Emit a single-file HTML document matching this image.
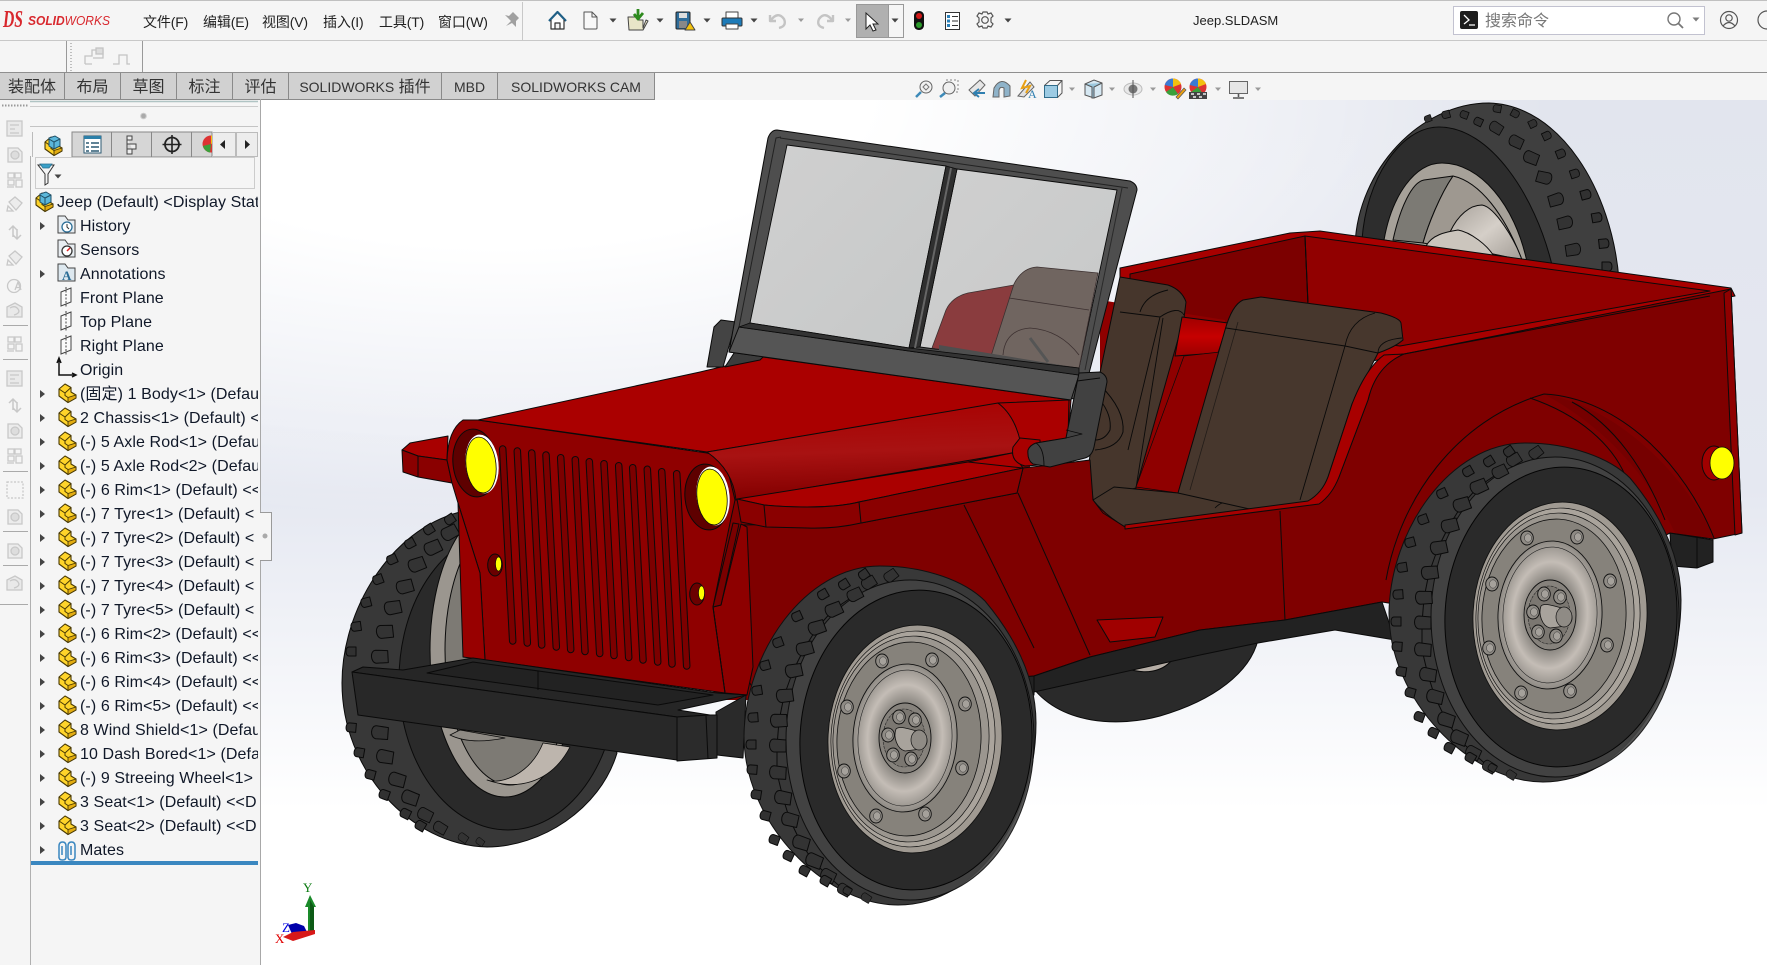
<!DOCTYPE html>
<html lang="zh"><head><meta charset="utf-8"><title>Jeep.SLDASM</title>
<style>
html,body{margin:0;padding:0;width:1767px;height:965px;overflow:hidden;background:#f5f5f5}
body{position:relative;font-family:"Liberation Sans","Noto Sans CJK SC",sans-serif;color:#222}
.a{position:absolute;white-space:nowrap}
.m{top:12px;height:20px;line-height:20px;font-size:14px;letter-spacing:-.15px;color:#222}
.t{top:73px;height:26px;line-height:29px;font-size:16px;color:#333;text-align:center;background:#d1d1d1;border-right:1px solid #8a8a8a;box-sizing:border-box}
.t span{font-size:14px}
.r{left:80px;width:178px;height:24px;line-height:24px;font-size:16px;letter-spacing:.1px;color:#101828;overflow:hidden;margin-top:2px}
#gfx{left:261px;top:100px;width:1506px;height:865px;background:radial-gradient(1050px 420px at 240px 0,#fff 0,#fff 35%,rgba(255,255,255,.5) 70%,rgba(255,255,255,0) 100%),linear-gradient(180deg,#e2e5ee 0,#e5e8f1 45%,#fff 82%)}
svg{position:absolute;left:0;top:0}
</style></head><body>
<div class="a" style="left:0;top:0;width:1767px;height:1px;background:#c0c0c0"></div>
<div class="a" style="left:0;top:40px;width:1767px;height:1px;background:#c8c8c8"></div>
<div class="a" style="left:0;top:72px;width:1767px;height:1px;background:#8f8f8f"></div>
<div class="a" id="gfx"></div>

<svg width="1767" height="965" viewBox="0 0 1767 965" xmlns="http://www.w3.org/2000/svg">
<defs>
<linearGradient id="hood" x1="0" y1="0" x2="0.12" y2="1"><stop offset="0" stop-color="#a80000"/><stop offset=".55" stop-color="#a81212"/><stop offset="1" stop-color="#830000"/></linearGradient>
<linearGradient id="glass" x1="0" y1="0" x2="1" y2="1"><stop offset="0" stop-color="#d0d0d0"/><stop offset="1" stop-color="#c6c8c8"/></linearGradient>
<radialGradient id="dish" cx=".5" cy=".5" r=".5"><stop offset="0" stop-color="#8a8680"/><stop offset=".48" stop-color="#8d8983"/><stop offset=".72" stop-color="#c4bdb6"/><stop offset="1" stop-color="#8f8b85"/></radialGradient>
<linearGradient id="tube" x1="0" y1="0" x2="0" y2="1"><stop offset="0" stop-color="#a00000"/><stop offset=".5" stop-color="#c60000"/><stop offset="1" stop-color="#9a0000"/></linearGradient>
<linearGradient id="cone" x1="0" y1="0" x2="1" y2="1"><stop offset="0" stop-color="#a8a29b"/><stop offset=".5" stop-color="#d5cfc8"/><stop offset="1" stop-color="#a29c95"/></linearGradient>
<path id="lg" d="M8,-6 L-4,-7 C-10,-7 -10,5 -4,6 L8,6 Z" fill="#333" stroke="#0a0a0a" stroke-width="1"/>
<path id="ls" d="M5,-5 L-2,-5 C-6,-5 -6,4 -2,4 L5,4 Z" fill="#313131" stroke="#0a0a0a" stroke-width="1"/>
<g id="bolt"><ellipse rx="6.3" ry="7" fill="#8f8b85" stroke="#111" stroke-width=".9"/><ellipse cx="1" rx="3.5" ry="4.2" fill="#a5a19b" stroke="#333" stroke-width=".5"/></g>
<g id="wheel">
 <path d="M1389,613 C1390,530 1450,443 1525,443 C1570,443 1610,458 1630,478 C1665,520 1681,560 1681,600 C1681,690 1625,782 1543,782 C1470,782 1389,700 1389,613 Z" fill="#383838" stroke="#111"/>
 <ellipse cx="1555" cy="617" rx="124" ry="160" fill="#444" opacity=".9"/>
 <ellipse cx="1561" cy="617" rx="116" ry="150" transform="rotate(3 1561 617)" fill="#2a2a2a" stroke="#050505"/>
 <polyline points="1500,472 1478,487 1462,505 1449,526 1438,548 1429,573 1424,598 1422,623 1422,650 1428,675 1435,697 1446,720 1458,738 1473,753 1489,767" fill="none" stroke="#0a0a0a"/>
 <use href="#lg" transform="translate(1536,453) rotate(-38) scale(.8)"/><use href="#lg" transform="translate(1514,460) rotate(-32) scale(.85)"/><use href="#lg" transform="translate(1500,472) rotate(-28) scale(.9)"/><use href="#lg" transform="translate(1479,487) rotate(-25)"/><use href="#lg" transform="translate(1462,505) rotate(-20)"/><use href="#lg" transform="translate(1450,526) rotate(-16)"/><use href="#lg" transform="translate(1439,548) rotate(-12)"/><use href="#lg" transform="translate(1430,573) rotate(-8)"/><use href="#lg" transform="translate(1424,598) rotate(-4)"/><use href="#lg" transform="translate(1423,623)"/><use href="#lg" transform="translate(1423,650) rotate(3)"/><use href="#lg" transform="translate(1428,675) rotate(8)"/><use href="#lg" transform="translate(1435,697) rotate(12)"/><use href="#lg" transform="translate(1446,720) rotate(16)"/><use href="#lg" transform="translate(1459,738) rotate(20)"/><use href="#lg" transform="translate(1473,753) rotate(24) scale(.9)"/><use href="#lg" transform="translate(1489,767) rotate(28) scale(.8)"/><use href="#lg" transform="translate(1511,775) rotate(30) scale(.6)"/>
 <use href="#ls" transform="translate(1509,452) rotate(-35)"/><use href="#ls" transform="translate(1489,462) rotate(-32)"/><use href="#ls" transform="translate(1468,472) rotate(-30)"/><use href="#ls" transform="translate(1442,494) rotate(-24)"/><use href="#ls" transform="translate(1423,520) rotate(-20)"/><use href="#ls" transform="translate(1410,543) rotate(-15)"/><use href="#ls" transform="translate(1402,568) rotate(-9)"/><use href="#ls" transform="translate(1398,595) rotate(-4)"/><use href="#ls" transform="translate(1396,622)"/><use href="#ls" transform="translate(1397,647) rotate(4)"/><use href="#ls" transform="translate(1401,672) rotate(9)"/><use href="#ls" transform="translate(1410,693) rotate(15)"/><use href="#ls" transform="translate(1419,717) rotate(20)"/><use href="#ls" transform="translate(1433,733) rotate(25)"/><use href="#ls" transform="translate(1449,748) rotate(28)"/><use href="#ls" transform="translate(1470,758) rotate(30)"/><use href="#ls" transform="translate(1492,768) rotate(30) scale(.8)"/>
 <ellipse cx="1560" cy="616" rx="87" ry="114" transform="rotate(3 1560 616)" fill="#a09a92" stroke="#111" stroke-width=".9"/>
 <ellipse cx="1558" cy="616" rx="82" ry="108" transform="rotate(3 1558 616)" fill="#aaa49c" stroke="#111" stroke-width=".7"/>
 <ellipse cx="1556" cy="616" rx="78" ry="103" transform="rotate(3 1556 616)" fill="#9b968f" stroke="#111" stroke-width=".7"/>
 <ellipse cx="1554" cy="616" rx="72" ry="97" transform="rotate(3 1554 616)" fill="#86827b" stroke="#111" stroke-width=".8"/>
 <ellipse cx="1550" cy="615" rx="52" ry="74" transform="rotate(3 1550 615)" fill="url(#dish)" stroke="#111" stroke-width=".9"/>
 <ellipse cx="1550" cy="615" rx="47" ry="68" transform="rotate(3 1550 615)" fill="none" stroke="#222" stroke-width=".6"/>
 <ellipse cx="1550" cy="615" rx="26" ry="35" fill="#86827c" stroke="#111" stroke-width=".9"/>
 <ellipse cx="1549" cy="615" rx="21" ry="29" fill="#7b7771" stroke="#222" stroke-width=".6" stroke-dasharray="3 1"/>
 <use href="#bolt" x="1527" y="538"/><use href="#bolt" x="1577" y="537"/><use href="#bolt" x="1610" y="581"/><use href="#bolt" x="1607" y="645"/><use href="#bolt" x="1570" y="691"/><use href="#bolt" x="1521" y="693"/><use href="#bolt" x="1489" y="648"/><use href="#bolt" x="1492" y="584"/>
 <use href="#bolt" x="1544" y="594"/><use href="#bolt" x="1560" y="597"/><use href="#bolt" x="1533" y="612"/><use href="#bolt" x="1538" y="632"/><use href="#bolt" x="1556" y="636"/>
 <path d="M1541,606 C1545,602 1556,607 1566,609 C1574,612 1574,624 1566,626 L1550,628 C1542,626 1538,614 1541,606 Z" fill="#a8a39c" stroke="#111" stroke-width=".8"/>
 <ellipse cx="1564" cy="617" rx="8" ry="10" fill="#8f8b85" stroke="#111" stroke-width=".7"/>
</g>
<g id="prt"><path d="M1,6 L7,1 L13,4.5 L13,9 L18,12 V15 L10,19.5 L1,13 Z" fill="#ffd42a" stroke="#4a3a05" stroke-width="1.1" stroke-linejoin="round"/><path d="M10,14.5 L18,12 V15 L10,19.5 Z" fill="#e3ac10" stroke="#4a3a05" stroke-width=".9"/><path d="M1,6 L7,10 L13,4.5 M7,10 V12.5 L10,14.5" fill="none" stroke="#4a3a05" stroke-width="1"/></g>
<path id="tri" d="M0,-4 L5,0 L0,4 Z" fill="#444"/>
<path id="dd" d="M-3.5,-1.5 H3.5 L0,2.5 Z" fill="#444"/>
<path id="ddg" d="M-3,-1.5 H3 L0,2 Z" fill="#9a9a9a"/>
<g id="plane" fill="none" stroke="#444" stroke-width="1"><path d="M1,5 L11,1 V15 L1,19 Z" fill="#fafafa"/><path d="M6,0 V20" stroke-dasharray="2 1.5"/></g>
<g id="gi" fill="none" stroke="#c8c8c8" stroke-width="1.3"><rect x="1" y="1" width="15" height="15" fill="#e9e9e9"/><path d="M4,5 H13 M4,9 H9 M4,13 H13"/></g>
<g id="g2" fill="none" stroke="#c8c8c8" stroke-width="1.3"><path d="M2,2 H12 L16,6 V16 H2 Z" fill="#ececec"/><circle cx="9" cy="9" r="4" fill="#ddd"/></g>
<g id="g3" fill="none" stroke="#c8c8c8" stroke-width="1.3"><rect x="2" y="1" width="6" height="5"/><rect x="9" y="1" width="6" height="5"/><rect x="2" y="8" width="6" height="5"/><path d="M10,8 H16 V15 H10 Z M1,15 H8"/></g>
<g id="g4" fill="none" stroke="#c8c8c8" stroke-width="1.3"><path d="M3,6 L9,1 L16,7 L10,14 Z" fill="#ececec"/><path d="M2,10 L7,15 H1 Z"/></g>
<g id="g5" fill="none" stroke="#c8c8c8" stroke-width="1.5"><path d="M7,3 V13 M3,6 L7,2 L11,6 M11,15 V5"/><path d="M15,11 L11,15 L7,11"/></g>
<g id="g6" fill="none" stroke="#c8c8c8" stroke-width="1.3"><circle cx="8" cy="9" r="6.500"/><path d="M9,13 L12,5 L15,13 M10,10.500 H14"/></g>
<g id="g7" fill="none" stroke="#c8c8c8" stroke-width="1.3"><path d="M1,5 L9,1 L16,5 V15 H1 Z" fill="#e9e9e9"/><path d="M4,6 Q9,3 12,7 Q15,11 8,13"/></g>
<g id="g8" fill="none" stroke="#c8c8c8" stroke-width="1.3"><rect x="1" y="1" width="16" height="16" stroke-dasharray="2 1.500"/></g>
</defs>

<!-- ===== Spare wheel ===== -->
<g stroke="#0a0a0a" stroke-linejoin="round">
<path d="M1355,245 C1358,170 1420,103 1489,103 C1560,105 1612,190 1619,280 L1355,250 Z" fill="#3f3f3f"/>
<path d="M1362,240 C1366,180 1400,127 1439,127 C1490,127 1535,195 1552,265 L1362,240 Z" fill="#2d2d2d"/>
<path d="M1384,240 C1392,195 1415,163 1442,163 C1480,163 1515,205 1527,262 Z" fill="#a6a199"/>
<path d="M1393,240 C1400,208 1412,182 1424,180 L1453,176 C1440,195 1428,225 1423,243 Z" fill="#7c7a74"/>
<path d="M1453,176 C1480,182 1505,215 1522,260 L1423,243 C1428,225 1440,195 1453,176 Z" fill="#9e9890"/>
<path d="M1450,232 C1458,215 1470,205 1482,205 C1495,207 1515,240 1522,260 L1450,245 Z" fill="url(#cone)"/>
<path d="M1426,246 C1432,235 1445,232 1458,230 C1470,232 1488,245 1495,258 Z" fill="#cbc5bd"/>
<g stroke-width="1">
<use href="#lg" transform="translate(1496,128) rotate(30) scale(.8)"/><use href="#lg" transform="translate(1516,142) rotate(24) scale(.85)"/><use href="#lg" transform="translate(1531,158) rotate(20) scale(.9)"/><use href="#lg" transform="translate(1544,178) rotate(16) scale(-.9,.9)"/><use href="#lg" transform="translate(1556,200) rotate(-15) scale(-.9,.9)"/><use href="#lg" transform="translate(1565,223) rotate(-12) scale(-.9,.9)"/><use href="#lg" transform="translate(1573,250) rotate(-8) scale(-.9,.9)"/>
<use href="#ls" transform="translate(1515,114) rotate(28) scale(-.8,.8)"/><use href="#ls" transform="translate(1533,124) rotate(-25) scale(-.8,.8)"/><use href="#ls" transform="translate(1547,136) rotate(-25) scale(-.85,.85)"/><use href="#ls" transform="translate(1561,154) rotate(-22) scale(-.9,.9)"/><use href="#ls" transform="translate(1575,174) rotate(-18) scale(-.9,.9)"/><use href="#ls" transform="translate(1586,195) rotate(-15) scale(-1,1)"/><use href="#ls" transform="translate(1597,218) rotate(-10) scale(-1,1)"/><use href="#ls" transform="translate(1604,244) rotate(-6) scale(-1,1)"/><use href="#ls" transform="translate(1607,267) scale(-1,1)"/>
<use href="#ls" transform="translate(1478,122) rotate(25) scale(.85)"/><use href="#ls" transform="translate(1464,115) rotate(20) scale(.8)"/><use href="#ls" transform="translate(1446,115) rotate(-15) scale(.8)"/><use href="#ls" transform="translate(1428,119) rotate(-20) scale(.7)"/><use href="#ls" transform="translate(1497,109) rotate(10) scale(.8)"/>
</g>
</g>

<!-- ===== Body: bed ===== -->
<g stroke="#0a0a0a" stroke-linejoin="round">
<path d="M1120,268 L1290,233 L1320,231 L1731,288 L1735,296 L1404,356 L1120,400 Z" fill="#a80000"/>
<polygon points="1130,274 1305,236 1308,305 1225,330 1130,340" fill="#7c0000"/>
<polygon points="1305,236 1710,291 1400,346 1260,330 1225,330 1308,305" fill="#910000"/>
<line x1="1305" y1="236" x2="1308" y2="302"/>

<!-- rear tail stub -->
<path d="M1670,533 L1713,540 L1713,562 L1697,568 L1672,566 Z" fill="#222"/>
<line x1="1697" y1="537" x2="1697" y2="568"/>

<!-- far rear wheel under sill -->
<path d="M1030,684 C1060,726 1120,727 1160,716 C1215,700 1250,672 1258,640 L1258,625 L1034,670 Z" fill="#2a2a2a"/>
<path d="M1125,668 L1172,660 C1162,672 1145,675 1125,668 Z" fill="#b5ada5"/>

<!-- cockpit floor backing -->
<polygon points="1100,300 1225,320 1230,500 1100,520" fill="#8f0000" stroke="none"/>
<!-- body backing between hood and side -->
<polygon points="700,445 1030,440 1030,500 760,700 715,700 700,600" fill="#800000" stroke="none"/>

<!-- driver seat -->
<path d="M1120,277 L1168,285 Q1182,290 1186,302 L1184,318 L1136,488 L1093,500 L1089,463 L1100,373 Z" fill="#46362c"/>
<path d="M1120,312 L1160,317 L1128,450 M1160,317 Q1178,305 1184,315 M1168,290 Q1145,295 1140,312" fill="none" stroke-width=".9"/>
<path d="M1163,318 L1136,488" fill="none" stroke-width=".9"/>
<!-- tube -->
<polygon points="1182,317 1228,323 1218,353 1175,356" fill="url(#tube)"/>
<polygon points="1184,356 1220,352 1178,493 1136,487" fill="#8f0000" stroke-width=".7"/>
<!-- cushion -->
<path d="M1093,500 L1114,487 L1178,493 L1228,500 L1258,510 L1125,527 Q1105,515 1093,500 Z" fill="#46362c"/>
<path d="M1215,508 Q1225,497 1250,502" fill="none" stroke-width=".8"/>
<!-- passenger seat -->
<path d="M1178,493 L1225,330 Q1232,305 1243,300 L1261,297 L1381,313 Q1400,318 1401,323 L1403,340 Q1395,347 1378,353 L1352,404 L1328,477 Q1322,493 1308,503 L1254,510 Z" fill="#47372d"/>
<path d="M1226,328 L1345,346 L1378,353 M1345,346 L1300,500 M1345,346 Q1350,320 1375,313 M1378,353 Q1378,340 1402,338" fill="none" stroke-width=".9"/>
<path d="M1238,322 L1190,490" fill="none" stroke-width=".8" stroke-opacity=".6"/>

<!-- near side panel -->
<path d="M742,525 L861,523 L1017,493 L1023,468 L1050,465 L1090,460 L1093,500 L1103,513 L1125,527 L1319,503 L1339,477 L1368,400 L1380,358 L1404,354 L1731,289 L1742,533 L1713,539 L1670,533 L1500,620 L1382,602 L1285,620 L1200,630 L1090,657 L1034,676 L760,700 L748,680 Z" fill="#7f0000"/>
<!-- bright strip -->
<path d="M1404,354 L1384,355 Q1366,368 1352,404 L1328,477 Q1322,493 1308,501 L1125,525 L1125,529 L1319,504 Q1332,495 1339,477 L1368,400 Q1376,366 1404,354 Z" fill="#a80000"/>
<polygon points="1724,293 1731,289 1742,533 1735,535" fill="#8f0000"/>
<line x1="1404" y1="354" x2="1710" y2="296"/>
<!-- rear fender -->
<path d="M1544,394 C1610,405 1680,465 1714,538 L1675,533 C1650,480 1610,430 1544,394 Z" fill="#760000" stroke="none"/>
<path d="M1386,580 C1400,500 1455,420 1544,394 C1620,398 1685,465 1714,538 M1530,398 C1580,415 1612,445 1625,475 M1572,402 C1615,425 1645,470 1665,520" fill="none" stroke-width="1"/>
<line x1="1285" y1="620" x2="1280" y2="511"/>
<!-- sill -->
<path d="M1034,676 L1090,657 L1200,630 L1285,620 L1382,602 L1395,640 L1335,630 L1258,643 L1200,655 L1034,692 Z" fill="#222"/>
<path d="M760,700 L1034,676 L1034,695 L760,720 Z" fill="#222"/>
<!-- ledge -->
<polygon points="1097,620 1163,617 1155,637 1110,642" fill="#a00000"/>
<line x1="1018" y1="493" x2="1090" y2="655"/>
<line x1="964" y1="505" x2="1034" y2="648"/>
<line x1="861" y1="523" x2="858" y2="503"/>

<!-- Far front wheel -->
<path d="M342,683 C342,610 390,530 460,512 L520,520 L617,753 C600,810 540,847 487,847 C410,845 342,770 342,683 Z" fill="#383838"/>
<ellipse cx="508" cy="680" rx="109" ry="150" fill="#2a2a2a"/>
<ellipse cx="505" cy="650" rx="75" ry="147" fill="#9b968f"/>
<ellipse cx="510" cy="650" rx="65" ry="135" fill="#7d7a74"/>
<path d="M487,780 C500,785 530,775 543,743 L570,747 C550,785 515,790 487,780 Z" fill="#bdb5ad" stroke-width=".8"/>
<path d="M450,735 Q470,745 505,738 L460,730 Z" fill="#8e8a84" stroke-width=".8"/>
<g>
<use href="#lg" transform="translate(380,657) rotate(-3)"/><use href="#lg" transform="translate(385,632) rotate(-6)"/><use href="#lg" transform="translate(393,608) rotate(-12)"/><use href="#lg" transform="translate(405,587) rotate(-16)"/><use href="#lg" transform="translate(417,565) rotate(-22)"/><use href="#lg" transform="translate(433,548) rotate(-26)"/><use href="#lg" transform="translate(450,533) rotate(-30)"/>
<use href="#lg" transform="translate(380,733) rotate(4)"/><use href="#lg" transform="translate(385,757) rotate(8)"/><use href="#lg" transform="translate(397,780) rotate(14)"/><use href="#lg" transform="translate(410,798) rotate(18)"/><use href="#lg" transform="translate(425,815) rotate(24) scale(.9)"/><use href="#lg" transform="translate(440,828) rotate(28) scale(.8)"/><use href="#lg" transform="translate(463,838) rotate(32) scale(.6)"/><use href="#lg" transform="translate(480,842) rotate(34) scale(.5)"/>
<use href="#ls" transform="translate(351,652)"/><use href="#ls" transform="translate(356,627) rotate(-8)"/><use href="#ls" transform="translate(366,603) rotate(-14)"/><use href="#ls" transform="translate(378,580) rotate(-20)"/><use href="#ls" transform="translate(392,560) rotate(-24)"/><use href="#ls" transform="translate(410,544) rotate(-28)"/><use href="#ls" transform="translate(429,530) rotate(-32)"/><use href="#ls" transform="translate(450,520) rotate(-34)"/>
<use href="#ls" transform="translate(351,728) rotate(5)"/><use href="#ls" transform="translate(359,753) rotate(10)"/><use href="#ls" transform="translate(370,775) rotate(15)"/><use href="#ls" transform="translate(384,795) rotate(20)"/><use href="#ls" transform="translate(405,814) rotate(26)"/><use href="#ls" transform="translate(420,826) rotate(30)"/>
</g>

<!-- Near rear wheel -->
<use href="#wheel"/>

<!-- Front panel right -->
<polygon points="741,524 747,527 753,667 747,695 725,693 713,607 721,605" fill="#8d0000"/>
<!-- Left fender -->
<path d="M402,450 L410,443 L448,436 L447,460 L418,456 Z" fill="#a80000"/>
<path d="M402,450 L418,456 L447,460 L452,483 L418,477 L403,472 Z" fill="#8a0000"/>
<line x1="418" y1="456" x2="418" y2="477"/>
<!-- Grille plate -->
<path d="M447,460 Q448,430 463,420 L478,420 L707,453 Q722,456 727,467 L735,500 L730,523 L713,607 L725,693 L485,660 L480,573 L458,503 L452,483 Z" fill="#8f0000"/>
<path d="M458,503 L480,573 L485,660 L463,657 Z" fill="#980000"/>
<!-- Wedge -->
<polygon points="733,523 739,524 721,605 713,607" fill="#7a0000"/>
<line x1="713" y1="607" x2="725" y2="693"/>
<!-- Grille slots -->
<g stroke-linecap="round" fill="none">
<g stroke="#0a0a0a" stroke-width="7.5">
<path d="M502.7,449 L512.7,641 M517.3,451 L527.3,643 M531.7,453 L541.7,645 M546,455 L556.3,647 M560.7,457.7 L570.7,649.5 M575.3,459.7 L585,651.5 M589.3,461.7 L599.7,653.5 M604,463.7 L614,655.5 M618.7,465.7 L628.7,657.5 M632.7,467.7 L643,660 M647.3,469.3 L657.7,662 M661.7,471.7 L672,664 M676.7,473.7 L686.7,666"/>
</g>
<g stroke="#7c0000" stroke-width="5.5">
<path d="M502.7,449 L512.7,641 M517.3,451 L527.3,643 M531.7,453 L541.7,645 M546,455 L556.3,647 M560.7,457.7 L570.7,649.5 M575.3,459.7 L585,651.5 M589.3,461.7 L599.7,653.5 M604,463.7 L614,655.5 M618.7,465.7 L628.7,657.5 M632.7,467.7 L643,660 M647.3,469.3 L657.7,662 M661.7,471.7 L672,664 M676.7,473.7 L686.7,666"/>
</g>
</g>
<!-- Hood -->
<polygon points="478,420 700,372 763,357 1071,400 1068,440 998,404 707,452" fill="#aa0000"/>
<path d="M707,452 L998,403 Q1012,412 1020,438 L1012,453 L736,500 Q733,470 707,452 Z" fill="url(#hood)"/>
<path d="M998,403 L1069,400 L1068,438 L1036,443 L1020,440 Q1014,415 998,403 Z" fill="#aa0000"/>
<!-- Near fender -->
<path d="M737,499 L968,462 L1012,453 L1023,468 L859,502 Q840,507 807,507 Q780,507 764,505 Z" fill="#aa0000"/>
<path d="M737,499 L764,505 Q785,507 807,507 Q840,507 859,502 L1023,468 L1017,493 L861,523 Q835,529 807,528 L766,527 L741,522 Z" fill="#8a0000"/>
<line x1="764" y1="505" x2="766" y2="527"/><line x1="859" y1="502" x2="861" y2="523"/>
<line x1="968" y1="462" x2="1023" y2="468"/>
<!-- Hinge stub -->
<path d="M1020,438 L1040,440 L1040,465 L1025,466 Q1010,462 1013,447 Z" fill="#a80000"/>
<!-- Headlights -->
<ellipse cx="475" cy="463" rx="22" ry="34" transform="rotate(-6 475 463)" fill="#5e0000"/>
<ellipse cx="482" cy="464" rx="16.5" ry="29.5" transform="rotate(-6 482 464)" fill="#fff" stroke="none"/>
<ellipse cx="481" cy="465" rx="15" ry="28" transform="rotate(-6 481 465)" fill="#ffff00" stroke-width=".8"/>
<ellipse cx="707" cy="497" rx="22" ry="33" transform="rotate(-6 707 497)" fill="#5e0000"/>
<ellipse cx="713" cy="496" rx="16.5" ry="29.5" transform="rotate(-6 713 496)" fill="#fff" stroke="none"/>
<ellipse cx="712" cy="497" rx="15" ry="28" transform="rotate(-6 712 497)" fill="#ffff00" stroke-width=".8"/>
<ellipse cx="495" cy="565" rx="7.3" ry="11" fill="#6a0000"/><ellipse cx="498.5" cy="564" rx="3" ry="7" fill="#ffff00" stroke-width=".6"/>
<ellipse cx="697" cy="594" rx="7.3" ry="11" fill="#6a0000"/><ellipse cx="701.5" cy="593" rx="3" ry="7" fill="#ffff00" stroke-width=".6"/>
<!-- Tail light -->
<ellipse cx="1714" cy="463" rx="12" ry="17" fill="#a00000"/><ellipse cx="1722" cy="463" rx="12" ry="16" fill="#ffff00" stroke-width=".8"/>

<!-- Bumper -->
<polygon points="746,695 743,758 717,755 716,712" fill="#2a2a2a"/>
<polygon points="363,667 403,670 473,658 717,693 747,695 678,710 710,715 677,717 352,672" fill="#262626"/>
<polygon points="427,673 473,662 713,695 658,705" fill="#222"/>
<line x1="538" y1="671" x2="538" y2="690"/>
<polygon points="352,672 677,717 677,760 358,715" fill="#282828"/>
<polygon points="677,717 710,715 717,715 717,758 677,761" fill="#2b2b2b"/>
<line x1="706" y1="716" x2="708" y2="759"/>

<!-- Near front wheel -->
<use href="#wheel" transform="translate(-645,123)"/>

<!-- Windshield: left pivot -->
<polygon points="714,327 721,320 736,322 723,367 707,367" fill="#444"/>
<polygon points="736,350 768,352 760,360 725,367" fill="#3c3c3c"/>
<!-- Frame -->
<path d="M768,138 Q771,130 777,130 L1130,181 Q1137,184 1137,190 L1082,400 L729,352 Z" fill="#4e4e4e"/>
<!-- Glass -->
<polygon points="787,145 946,166 909,348 750,323" fill="url(#glass)" stroke-width=".9"/>
<polygon points="957,169 1117,190 1079,368 920,347" fill="url(#glass)" stroke-width=".9"/>
<!-- seen through glass -->
<g stroke="#3c3030" stroke-width=".8">
<path d="M932,348 L946,310 Q952,297 968,293 L1014,285 L991,358 Z" fill="#8a3c3e"/>
<path d="M1014,284 Q1022,268 1037,267 L1098,273 L1079,368 L991,356 Z" fill="#706560"/>
<path d="M1009,298 L1089,310 M1003,355 Q1005,330 1030,328 Q1060,330 1079,355" fill="none"/>
<path d="M1030,338 L1048,362" fill="none" stroke="#555" stroke-width="3"/>
</g>
<polygon points="939,345 1078,368 1078,374 939,350" fill="#4e4e4e" stroke="none"/>
<path d="M780,138 L1128,188 M781,137 L776,138 L739,327" fill="none" stroke="#222" stroke-width="1"/>
<polygon points="946,166 957,169 920,347 909,348" fill="#2f2f2f" stroke-width=".8"/>
<line x1="951" y1="168" x2="915" y2="348" stroke="#666" stroke-width="2"/>
<polygon points="739,327 1079,375 1071,400 729,352" fill="#555"/>
<polygon points="750,323 909,348 1079,368 1079,375 739,327" fill="#333" stroke-width=".8"/>
<path d="M1122,188 L1085,370" stroke="#2a2a2a" fill="none"/>
<!-- Steering ring behind arm -->
<path d="M1100,385 Q1125,410 1123,432 Q1118,448 1095,450" fill="none" stroke-width="1"/>
<path d="M1100,400 Q1112,415 1110,430 Q1105,440 1095,440" fill="none" stroke-width="1"/>
<!-- Right pivot arm -->
<path d="M1079,373 L1100,372 Q1107,375 1107,382 L1094,447 Q1092,456 1085,458 L1050,467 L1033,464 Q1027,460 1028,450 Q1030,445 1036,443 L1066,438 Z" fill="#414141"/>
<path d="M1077,381 L1100,378 M1066,430 L1082,434 L1066,438 M1036,443 Q1044,448 1044,466" fill="none" stroke-width=".9"/>
</g>

<!-- Triad -->
<polygon points="310,895 305,907 308,907 308,932 314,932 314,907 316,907" fill="#1a8a2a"/>
<polygon points="310,900 310,932 314,932 314,907" fill="#0d5a16"/>
<polygon points="288,925 296,923 304,926 307,932 292,934" fill="#0000aa"/>
<polygon points="283,937 293,932 315,930 315,934 293,941" fill="#d81818"/>
<text x="303" y="892" font-family="Liberation Serif,serif" font-size="13" fill="#0a7a10">Y</text>
<text x="282" y="932" font-family="Liberation Serif,serif" font-size="13" fill="#0000e0">Z</text>
<text x="275" y="943" font-family="Liberation Serif,serif" font-size="13" fill="#e00000">X</text>

<!-- ===== UI Lines ===== -->
<line x1="522.5" y1="2" x2="522.5" y2="40" stroke="#c8c8c8"/>
<line x1="66.5" y1="41" x2="66.5" y2="72" stroke="#999"/>
<line x1="142.5" y1="41" x2="142.5" y2="72" stroke="#999"/>
<line x1="71" y1="43" x2="71" y2="72" stroke="#888" stroke-dasharray="1 2"/>
<g fill="none" stroke="#c4c4c4" stroke-width="1.3"><path d="M85,64 V56 H92 V50 H103 V58 H93 M92,64 H85"/><rect x="96" y="48" width="7" height="6" fill="#ddd"/><path d="M113,64 H119 V55 H127 V64 H130"/></g>

<!-- Logo -->
<text x="3" y="27" font-family="Liberation Serif,serif" font-style="italic" font-weight="700" font-size="24" fill="#d8272d" textLength="20" lengthAdjust="spacingAndGlyphs">DS</text>
<text x="28" y="25" font-family="Liberation Sans,sans-serif" font-style="italic" font-size="13" fill="#d8272d" textLength="82" lengthAdjust="spacingAndGlyphs"><tspan font-weight="700">SOLID</tspan>WORKS</text>

<!-- Pin -->
<path d="M513,13 L509,17 L505,16 L511,22 L506,27 L512,24 L516,28 L516,22 L519,19 Z" fill="#a0a0a0" transform="translate(0,-1)"/>

<!-- Top toolbar -->
<g fill="none" stroke-linejoin="round">
<path d="M549,21 L557.5,12 L566,21" stroke="#1f5f86" stroke-width="2.2"/>
<path d="M551,20 V29 H564 V20 M555,29 V23 H560 V29" stroke="#333" stroke-width="1.2" fill="#fff"/>
<path d="M584,12 H592 L597,17 V28 Q597,29 596,29 H585 Q584,29 584,28 Z" stroke="#555" fill="#f8f8f8"/><path d="M592,12 V17 H597" stroke="#555"/>
<path d="M628,17 H636 L638,20 H643 V28 L646,20 L648,21 L643,30 H629 Z" fill="#e9e6c8" stroke="#444"/><path d="M634,14 L638,19 L643,13 M638,9 V18" stroke="#2d8a1e" stroke-width="2.8"/>
<rect x="676" y="12" width="14" height="17" rx="1" fill="#2f6d9a" stroke="#222"/><rect x="679" y="13" width="8" height="5" fill="#ddd"/><rect x="679" y="21" width="8" height="7" fill="#888"/><path d="M685,30 L690,22 L695,30 Z" fill="#f4c20d" stroke="#444"/>
<path d="M726,19 V12 H738 V19" stroke="#444" fill="#fff"/><rect x="722" y="18" width="20" height="8" rx="1" fill="#1e7bb8" stroke="#333"/><rect x="726" y="24" width="12" height="5" fill="#fff" stroke="#444"/>
<path d="M770,15 V21 H776 M771,20 Q778,11 784,19 Q787,26 779,28" stroke="#c4c4c4" stroke-width="2.4"/>
<path d="M833,15 V21 H827 M832,20 Q825,11 819,19 Q816,26 824,28" stroke="#c4c4c4" stroke-width="2.4"/>
</g>
<rect x="856.5" y="4.5" width="47" height="33" fill="#f5f5f5" stroke="#999"/>
<rect x="857" y="5" width="31" height="32" fill="#b0b0b0"/><line x1="888.5" y1="5" x2="888.5" y2="37" stroke="#999"/>
<path d="M866,13 V29 L870,25 L873,31 L876,30 L873,24 L878,24 Z" fill="#fff" stroke="#222"/>
<rect x="914" y="11" width="10" height="19" rx="4.5" fill="#111"/><circle cx="919" cy="16" r="3" fill="#d01818"/><circle cx="919" cy="25" r="3" fill="#2a9a2a"/>
<rect x="945.5" y="12.5" width="14" height="17" fill="#fff" stroke="#333"/><path d="M947,15 H950 V18 H947 Z M947,19.5 H950 V22.5 H947 Z M947,24 H950 V27 H947 Z" fill="#2a80b9"/><path d="M952,16.5 H958 M952,21 H958 M952,25.5 H958" stroke="#333"/>
<g fill="none" stroke="#555" stroke-width="1.2"><circle cx="985" cy="20" r="3.3"/><path d="M983,12 H987 L988,14 L991,13 L993,16 L991,18 V22 L993,24 L991,27 L988,26 L987,28 H983 L982,26 L979,27 L977,24 L979,22 V18 L977,16 L979,13 L982,14 Z"/></g>
<use href="#dd" x="613" y="20"/><use href="#dd" x="660" y="20"/><use href="#dd" x="707" y="20"/><use href="#dd" x="754" y="20"/><use href="#ddg" x="801" y="20"/><use href="#ddg" x="848" y="20"/><use href="#dd" x="895" y="20"/><use href="#dd" x="1008" y="20"/>

<!-- Search -->
<rect x="1453.5" y="6.5" width="251" height="28" fill="#fff" stroke="#c2c2d0"/>
<rect x="1460" y="11" width="18" height="18" rx="2" fill="#1e1e1e"/><path d="M1464,15 L1469,20 L1464,24 M1469,25 H1475" fill="none" stroke="#fff" stroke-width="1.3"/>
<circle cx="1674" cy="19" r="6" fill="none" stroke="#777" stroke-width="1.4"/><line x1="1678.5" y1="23.5" x2="1683" y2="28" stroke="#777" stroke-width="1.8"/>
<use href="#dd" x="1696" y="19" opacity=".7"/>
<g fill="none" stroke="#555" stroke-width="1.2"><circle cx="1729" cy="20" r="8.5"/><circle cx="1729" cy="18" r="3.2"/><path d="M1723,26 Q1729,19 1735,26"/><path d="M1767,11 A9,9 0 0 0 1767,29"/></g>

<!-- View toolbar -->
<g fill="none" stroke="#666">
<circle cx="926" cy="87" r="6" fill="#f2f2f2"/><path d="M921,92 L916,97" stroke="#3d8ab8" stroke-width="2.5"/><path d="M923,87 L926,84 L929,87 L926,90 Z" stroke="#777"/>
<rect x="946" y="80" width="12" height="12" stroke="#888" stroke-dasharray="2 2"/><circle cx="949" cy="88" r="6" fill="#f0f0f0"/><path d="M945,93 L940,97" stroke="#3d8ab8" stroke-width="2.5"/>
<path d="M969,90 L980,80 L985,85 L975,96 Z" fill="#e6e6e6"/><path d="M985,93 H974 M979,89 L974,93 L979,97" stroke="#2f7fb0" stroke-width="2"/>
<path d="M994,88 Q1001,76 1010,86 V96 L1004,97 V88 Q1000,86 999,90 V97 L993,97 Z" fill="#8fb3c9"/>
<path d="M1018,96 L1030,82 L1034,87 L1024,97 Z" fill="#e2e2e2"/><path d="M1026,80 L1022,88 L1030,86 L1026,93" stroke="#e8a014" stroke-width="2"/>
<text x="1028" y="98" font-family="Liberation Serif,serif" font-size="12" fill="#2f7fb0" stroke="none">A</text>
<rect x="1044.5" y="85.5" width="13" height="12" fill="#9ccbe3" stroke="#2f6d8c"/><path d="M1044.5,85.5 L1050,80.5 H1062 V93 L1057.5,97.5 M1057.5,85.5 L1062,80.5" stroke="#555"/>
<path d="M1085,84 L1094,80 L1102,83 V95 L1094,98 L1085,95 Z" fill="#d6e8f2" stroke="#555"/><path d="M1085,84 L1092,87 V98 H1094 V87 L1102,83" fill="#9cc8de" stroke="#555"/>
<ellipse cx="1133" cy="89" rx="9" ry="6" fill="#e8e8e8" stroke="#bbb"/><circle cx="1133" cy="89" r="4.5" fill="#777" stroke="none"/><path d="M1133,80 V98" stroke="#555"/>
</g>
<circle cx="1173" cy="87" r="8.5" fill="#d33"/><path d="M1173,87 L1164.8,85 A8.5,8.5 0 0 1 1173,78.5 Z" fill="#3a7bd5"/><path d="M1173,87 L1166,92 A8.5,8.5 0 0 0 1178,94 Z" fill="#3aa03a"/><path d="M1173,87 L1181,84 A8.5,8.5 0 0 0 1173,78.5 Z" fill="#f2c010"/>
<path d="M1176,97 L1184,88 L1186,90 L1178,99 Z" fill="#e8a014" stroke="#555" stroke-width=".7"/>
<circle cx="1198" cy="87" r="8.5" fill="#d33"/><path d="M1198,87 L1189.8,85 A8.5,8.5 0 0 1 1198,78.5 Z" fill="#3a7bd5"/><path d="M1198,87 L1191,92 A8.5,8.5 0 0 0 1203,94 Z" fill="#3aa03a"/><path d="M1198,87 L1206,84 A8.5,8.5 0 0 0 1198,78.5 Z" fill="#f2c010"/>
<rect x="1189" y="92" width="18" height="7" fill="#444"/><path d="M1191,94 H1194 M1197,94 H1200 M1203,94 H1206 M1193,97 H1196 M1199,97 H1202" stroke="#eee" stroke-width="1.5"/>
<rect x="1229.5" y="81.5" width="18" height="12" fill="#e6e6e6" stroke="#666"/><path d="M1238.5,94 V97 M1233,98 H1244" stroke="#555" stroke-width="1.6"/>
<use href="#ddg" x="1072" y="89"/><use href="#ddg" x="1112" y="89"/><use href="#ddg" x="1153" y="89"/><use href="#ddg" x="1218" y="89"/><use href="#ddg" x="1258" y="89"/>

<!-- Left panel background -->
<rect x="0" y="99" width="260" height="866" fill="#f5f5f5"/>
<line x1="0" y1="99.5" x2="655" y2="99.5" stroke="#8a8a8a"/>
<line x1="260.5" y1="99" x2="260.5" y2="965" stroke="#a8a8a8"/>
<line x1="30.5" y1="156" x2="30.5" y2="965" stroke="#b0b0b0"/>
<line x1="2" y1="105.5" x2="28" y2="105.5" stroke="#999" stroke-dasharray="1.5 1.5" stroke-width="2"/>
<line x1="30" y1="101.5" x2="258" y2="101.5" stroke="#b0c4c4" stroke-width="1.5"/><line x1="30" y1="106.5" x2="258" y2="106.5" stroke="#ccc"/>
<circle cx="143.5" cy="116" r="2.8" fill="#aaa" stroke="#ccc"/>
<line x1="30" y1="126.5" x2="258" y2="126.5" stroke="#c4c4c4"/>
<!-- panel tabs -->
<rect x="72" y="132" width="140" height="25" fill="#d6d6d6" stroke="#888"/>
<line x1="32.5" y1="132" x2="32.5" y2="157" stroke="#bbb"/><line x1="111.5" y1="132" x2="111.5" y2="157" stroke="#888"/><line x1="151.5" y1="132" x2="151.5" y2="157" stroke="#888"/><line x1="191.5" y1="132" x2="191.5" y2="157" stroke="#888"/>
<g transform="translate(44,136)"><use href="#prt"/><path d="M5,2 L11,0 L16,3 L16,10 L10,13 L5,10 Z" fill="#5bb7da" stroke="#1f4f66"/><path d="M5,3 L10,6 L16,3 M10,6 V13" fill="none" stroke="#1f4f66"/></g>
<rect x="84" y="136" width="17" height="17" fill="#fff" stroke="#2c5a73"/><rect x="84" y="136" width="17" height="3" fill="#2c7fa8"/><path d="M86,143 H89 M86,147 H89 M86,151 H89 M91,143 H99 M91,147 H99 M91,151 H99" stroke="#2c5a73" stroke-width="1.5"/>
<path d="M127,136 H132 V140 H127 Z M127,144 H136 V149 H127 Z M127,136 V154 H132 V149" fill="#eee" stroke="#444"/>
<g fill="none" stroke="#222"><circle cx="172" cy="144.5" r="7" stroke-width="1.8"/><path d="M172,135 V154 M162.5,144.5 H181.5" stroke-width="1.6"/></g>
<circle cx="211" cy="144" r="8.5" fill="#d33"/><path d="M211,144 L203,146 A8.5,8.5 0 0 0 210,152.5 Z" fill="#3aa03a"/><path d="M211,144 V135.5 A8.5,8.5 0 0 1 219,141 Z" fill="#f2c010"/>
<rect x="212.5" y="132.5" width="23" height="24" fill="#ededed" stroke="#bbb"/><rect x="236.5" y="132.5" width="21" height="24" fill="#ededed" stroke="#bbb"/>
<path d="M225,140 V149 L220,144.5 Z M245,140 V149 L250,144.5 Z" fill="#222"/>
<!-- filter -->
<rect x="35.5" y="157.5" width="219" height="31" fill="#f5f5f5" stroke="#ccc"/>
<path d="M38,165 H54 L48,174 V183 L45,185 V174 Z" fill="#f4f4f4" stroke="#333"/><path d="M40,164 H52 L49,168 H43 Z" fill="#3aa0c8" stroke="#2a6f8e" stroke-width=".7"/>
<use href="#dd" x="58" y="176"/>

<!-- tree icons -->
<g transform="translate(35,192)"><use href="#prt"/><path d="M5,2 L11,0 L16,3 L16,10 L10,13 L5,10 Z" fill="#5bb7da" stroke="#1f4f66"/><path d="M5,3 L10,6 L16,3 M10,6 V13" fill="none" stroke="#1f4f66"/></g>
<g fill="none">
<path d="M58,216 V233 H75 V220 H68 L65,216 Z" fill="#e8edf1" stroke="#444"/><circle cx="67" cy="227" r="5" fill="#fff" stroke="#2a6d96" stroke-width="1.3"/><path d="M67,224 V227 L69,229" stroke="#333"/>
<path d="M58,240 V257 H75 V244 H68 L65,240 Z" fill="#e8edf1" stroke="#444"/><circle cx="67" cy="251" r="5" fill="#fff" stroke="#333" stroke-width="1.3"/><path d="M67,251 L70,248" stroke="#d22" stroke-width="1.5"/>
<path d="M58,264 V281 H75 V268 H68 L65,264 Z" fill="#dde8ef" stroke="#444"/>
</g>
<text x="62" y="280" font-family="Liberation Serif,serif" font-weight="700" font-size="13" fill="#2a6d96">A</text>
<use href="#plane" x="60" y="287"/><use href="#plane" x="60" y="311"/><use href="#plane" x="60" y="335"/>
<path d="M59,360 V375 H75 M57,363 L59,358 L61,363 M72,373 L76,375 L72,377" fill="none" stroke="#111" stroke-width="1.5"/>
<use href="#prt" x="58" y="383"/><use href="#prt" x="58" y="407"/><use href="#prt" x="58" y="431"/><use href="#prt" x="58" y="455"/><use href="#prt" x="58" y="479"/><use href="#prt" x="58" y="503"/><use href="#prt" x="58" y="527"/><use href="#prt" x="58" y="551"/><use href="#prt" x="58" y="575"/><use href="#prt" x="58" y="599"/><use href="#prt" x="58" y="623"/><use href="#prt" x="58" y="647"/><use href="#prt" x="58" y="671"/><use href="#prt" x="58" y="695"/><use href="#prt" x="58" y="719"/><use href="#prt" x="58" y="743"/><use href="#prt" x="58" y="767"/><use href="#prt" x="58" y="791"/><use href="#prt" x="58" y="815"/>
<g fill="none" stroke="#3a87c0" stroke-width="1.5"><path d="M59,858 V846 Q59,842 62.5,842 Q66,842 66,846 V857 Q66,860 62.5,860 Q59,860 59,857 M62,846 V855"/><path d="M68,858 V846 Q68,842 71.5,842 Q75,842 75,846 V857 Q75,860 71.5,860 Q68,860 68,857 M71,846 V855"/></g>
<!-- expanders -->
<g><use href="#tri" x="40" y="226"/><use href="#tri" x="40" y="274"/><use href="#tri" x="40" y="394"/><use href="#tri" x="40" y="418"/><use href="#tri" x="40" y="442"/><use href="#tri" x="40" y="466"/><use href="#tri" x="40" y="490"/><use href="#tri" x="40" y="514"/><use href="#tri" x="40" y="538"/><use href="#tri" x="40" y="562"/><use href="#tri" x="40" y="586"/><use href="#tri" x="40" y="610"/><use href="#tri" x="40" y="634"/><use href="#tri" x="40" y="658"/><use href="#tri" x="40" y="682"/><use href="#tri" x="40" y="706"/><use href="#tri" x="40" y="730"/><use href="#tri" x="40" y="754"/><use href="#tri" x="40" y="778"/><use href="#tri" x="40" y="802"/><use href="#tri" x="40" y="826"/><use href="#tri" x="40" y="850"/></g>
<rect x="31" y="861" width="227" height="4" fill="#3a87c0"/>
<!-- left strip icons -->
<use href="#gi" x="6" y="120"/><use href="#g2" x="6" y="146"/><use href="#g3" x="6" y="172"/><use href="#g4" x="6" y="196"/><use href="#g5" x="6" y="224"/><use href="#g4" x="6" y="250"/><use href="#g6" x="6" y="277"/><use href="#g7" x="6" y="302"/><use href="#g3" x="6" y="336"/><use href="#gi" x="6" y="370"/><use href="#g5" x="6" y="397"/><use href="#g2" x="6" y="422"/><use href="#g3" x="6" y="448"/><use href="#g8" x="6" y="481"/><use href="#g2" x="6" y="508"/><use href="#g2" x="6" y="542"/><use href="#g7" x="6" y="575"/>
<g stroke="#aaa"><line x1="3" y1="325.5" x2="28" y2="325.5"/><line x1="3" y1="359.5" x2="28" y2="359.5"/><line x1="3" y1="471.5" x2="28" y2="471.5"/><line x1="3" y1="531.5" x2="28" y2="531.5"/><line x1="3" y1="565.5" x2="28" y2="565.5"/><line x1="0" y1="604.5" x2="28" y2="604.5"/></g>
<!-- side nub -->
<path d="M260,512.5 H271.5 V560.5 H260" fill="#f5f5f5" stroke="#9a9a9a"/><circle cx="265" cy="536" r="2.5" fill="#aaa"/>
</svg>

<!-- Menu -->
<div class="a m" style="left:143px">文件(F)</div>
<div class="a m" style="left:203px">编辑(E)</div>
<div class="a m" style="left:262px">视图(V)</div>
<div class="a m" style="left:323px">插入(I)</div>
<div class="a m" style="left:379px">工具(T)</div>
<div class="a m" style="left:438px">窗口(W)</div>
<div class="a" style="left:1193px;top:11px;line-height:20px;font-size:13px;color:#222">Jeep.SLDASM</div>
<div class="a" style="left:1485px;top:11px;line-height:22px;font-size:16px;color:#777">搜索命令</div>
<!-- Tabs -->
<div class="a t" style="left:0;width:65px">装配体</div>
<div class="a t" style="left:65px;width:56px">布局</div>
<div class="a t" style="left:121px;width:56px">草图</div>
<div class="a t" style="left:177px;width:56px">标注</div>
<div class="a t" style="left:233px;width:56px">评估</div>
<div class="a t" style="left:289px;width:153px"><span>SOLIDWORKS</span> 插件</div>
<div class="a t" style="left:442px;width:56px"><span>MBD</span></div>
<div class="a t" style="left:498px;width:157px"><span>SOLIDWORKS CAM</span></div>
<!-- Tree -->
<div class="a r" style="left:57px;width:201px;top:189px">Jeep (Default) &lt;Display State-1&gt;</div>
<div class="a r" style="top:213px">History</div>
<div class="a r" style="top:237px">Sensors</div>
<div class="a r" style="top:261px">Annotations</div>
<div class="a r" style="top:285px">Front Plane</div>
<div class="a r" style="top:309px">Top Plane</div>
<div class="a r" style="top:333px">Right Plane</div>
<div class="a r" style="top:357px">Origin</div>
<div class="a r" style="top:381px">(固定) 1 Body&lt;1&gt; (Default</div>
<div class="a r" style="top:405px">2 Chassis&lt;1&gt; (Default) &lt;</div>
<div class="a r" style="top:429px">(-) 5 Axle Rod&lt;1&gt; (Default</div>
<div class="a r" style="top:453px">(-) 5 Axle Rod&lt;2&gt; (Default</div>
<div class="a r" style="top:477px">(-) 6 Rim&lt;1&gt; (Default) &lt;&lt;</div>
<div class="a r" style="top:501px">(-) 7 Tyre&lt;1&gt; (Default) &lt;</div>
<div class="a r" style="top:525px">(-) 7 Tyre&lt;2&gt; (Default) &lt;</div>
<div class="a r" style="top:549px">(-) 7 Tyre&lt;3&gt; (Default) &lt;</div>
<div class="a r" style="top:573px">(-) 7 Tyre&lt;4&gt; (Default) &lt;</div>
<div class="a r" style="top:597px">(-) 7 Tyre&lt;5&gt; (Default) &lt;</div>
<div class="a r" style="top:621px">(-) 6 Rim&lt;2&gt; (Default) &lt;&lt;</div>
<div class="a r" style="top:645px">(-) 6 Rim&lt;3&gt; (Default) &lt;&lt;</div>
<div class="a r" style="top:669px">(-) 6 Rim&lt;4&gt; (Default) &lt;&lt;</div>
<div class="a r" style="top:693px">(-) 6 Rim&lt;5&gt; (Default) &lt;&lt;</div>
<div class="a r" style="top:717px">8 Wind Shield&lt;1&gt; (Default</div>
<div class="a r" style="top:741px">10 Dash Bored&lt;1&gt; (Default</div>
<div class="a r" style="top:765px">(-) 9 Streeing Wheel&lt;1&gt;</div>
<div class="a r" style="top:789px">3 Seat&lt;1&gt; (Default) &lt;&lt;D</div>
<div class="a r" style="top:813px">3 Seat&lt;2&gt; (Default) &lt;&lt;D</div>
<div class="a r" style="top:837px">Mates</div>
</body></html>
